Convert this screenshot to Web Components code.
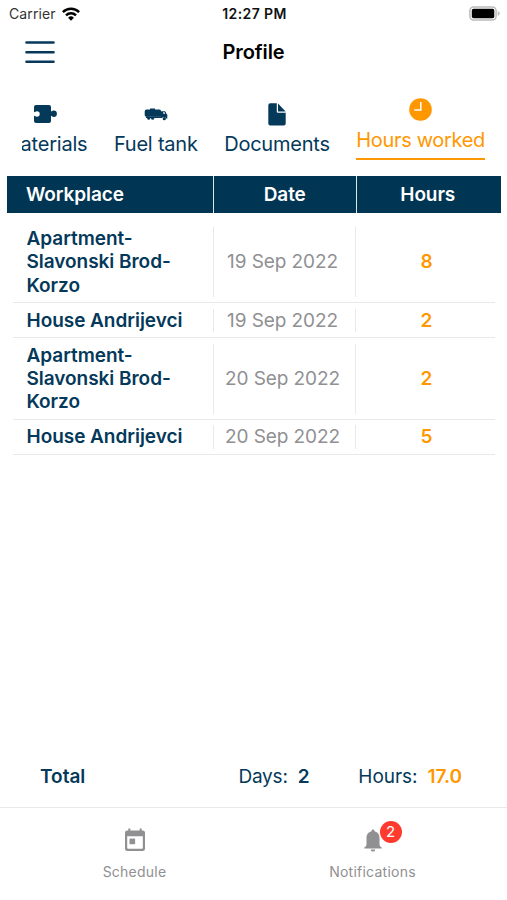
<!DOCTYPE html>
<html lang="en">
<head>
<meta charset="utf-8">
<meta name="viewport" content="width=device-width, initial-scale=1">
<title>Profile</title>
<style>
    html, body{height:100%;}
    body{
        margin:0;
        background:#fff;
        font-family:Inter, "Liberation Sans", sans-serif;
        --navy:#05395a;
        --header:#003654;
        --orange:#ff9800;
        --grey:#909092;
        --line:#e9e9e9;
    }
</style>
</head>
<body>
<profile-screen></profile-screen>

<script>
function attach(el, html) {
    const template = document.createElement('template');
    template.innerHTML = html;
    el.attachShadow({ mode: 'open' });
    el.shadowRoot.appendChild(template.content.cloneNode(true));
}

const icons = {
    puzzle: `<svg width="24" height="20" viewBox="0 0 24 20"><path fill="currentColor" d="M3 1h13q2 0 2 2v4.600c1-.4 1.300-1.100 2.700-1.100a2.800 2.800 0 0 1 0 6.400c-1.400 0-1.700-.8-2.700-1.100V17q0 2-2 2H3q-2 0-2-2v-5.200c1 0 1.500.9 3 .9a2.700 2.700 0 0 0 0-5.400c-1.500 0-2 .9-3 .9V3q0-2 2-2z"/></svg>`,
    truck: `<svg width="24" height="13" viewBox="0 0 24 13"><g fill="currentColor"><path d="M2.500 1.500H6V.6h5v.9h4.500q1.500.2 1.500 1.500v5.500H2Q.7 8.500.7 7V3.500q0-1.800 1.800-2z"/><path d="M17 3.200h3.500q1 0 1.300 1l.5 1.600 1 .6V10.600h-1.200a2.200 2.200 0 0 0-4-.6H2V8.300h15z"/><circle cx="4.700" cy="10.300" r="1.500"/><circle cx="8.600" cy="10.300" r="1.500"/><circle cx="20.300" cy="10.700" r="1.600"/></g><path fill="#fff" d="M19.200 4.300h1.400l.5 1.500h-1.900z"/></svg>`,
    file: `<svg width="18" height="23" viewBox="0 0 18 23"><path fill="currentColor" d="M2.300.3h6.500v8.500q0 1 1 1h7.900v10.700q0 2-2 2H2.300q-2 0-2-2V2.300q0-2 2-2z"/><path fill="currentColor" d="M10 .6l7.600 7.900H10z"/></svg>`,
    clock: `<svg width="23" height="23" viewBox="0 0 23 23"><circle cx="11.500" cy="11.500" r="11.300" fill="currentColor"/><path fill="none" stroke="#fff" stroke-width="1.500" d="M11.800 3.900v8H5.300"/></svg>`,
    calendar: `<svg width="22" height="24" viewBox="0 0 22 24"><path fill="currentColor" fill-rule="evenodd" d="M4.300.5h2v2h9.400v-2h2v2h1q2.300 0 2.300 2.300v15.900q0 2.300-2.300 2.300H3.300Q1 23 1 20.700V4.800q0-2.300 2.300-2.300h1zM3.200 8.200v11.600q0 1 1 1h13.600q1 0 1-1V8.200z"/><path fill="currentColor" d="M5.500 10.600h5.600v5.600H5.500z"/></svg>`,
    bell: `<svg width="18" height="23" viewBox="0 0 18 23"><path fill="currentColor" d="M9 .5c1 0 1.500.7 1.500 1.700 3.500.8 5 3.500 5 6.800v6.500q0 1.800 2.200 3v.9H.3v-.9q2.200-1.200 2.200-3V9c0-3.300 1.500-6 5-6.800C7.500 1.200 8 .5 9 .5zM6.800 20.400h4.400a2.200 2.200 0 0 1-4.400 0z"/></svg>`
};

class StatusBar extends HTMLElement {
    constructor() {
        super();
        attach(this, `
            <style>
                :host{
                    display:grid;
                    grid-template-columns:1fr auto 1fr;
                    align-items:center;
                    height:27px;
                    padding:0 7px 0 9px;
                    box-sizing:border-box;
                    color:#111;
                    font-size:14px;
                }
                .left{display:flex;align-items:center;gap:6px;color:#333;letter-spacing:.1px;}
                .time{font-weight:600;letter-spacing:.4px;}
                .battery{justify-self:end;}
                svg{display:block;}
            </style>
            <div class="left"><span>Carrier</span>
                <svg width="18" height="14" viewBox="0 0 18 14"><g fill="none" stroke="#000" stroke-width="2.500"><path d="M.9 5.100a11.700 11.700 0 0 1 16.200 0"/><path d="M4 8.400a7.100 7.100 0 0 1 10 0"/></g><path d="M9 13.700l-2.900-3a4.200 4.200 0 0 1 5.800 0z"/></svg>
            </div>
            <span class="time">12:27 PM</span>
            <svg class="battery" width="31" height="15" viewBox="0 0 31 15"><rect x=".9" y=".9" width="26.200" height="13.200" rx="3.800" fill="#fff" stroke="#bbb" stroke-width="1.500"/><path fill="#bbb" d="M28.700 5q2 .8 2 2.500t-2 2.500z"/><rect x="2.800" y="2.800" width="22.500" height="9.400" rx="1.800"/></svg>
        `);
    }
}

class NavHeader extends HTMLElement {
    constructor() {
        super();
        attach(this, `
            <style>
                :host{
                    display:grid;
                    grid-template-columns:1fr auto 1fr;
                    align-items:center;
                    height:50px;
                    padding:0 25px;
                }
                .menu{display:block;}
                .title{font-size:20px;font-weight:600;color:#000;letter-spacing:-.1px;}
            </style>
            <svg class="menu" width="30" height="24" viewBox="0 0 30 24"><path stroke="#07395a" stroke-width="2.600" stroke-linecap="round" d="M1.500 2.500h27M1.500 12.200h27M1.500 21.700h27"/></svg>
            <span class="title"><slot></slot></span>
        `);
    }
}

class TabItem extends HTMLElement {
    constructor() {
        super();
        attach(this, `
            <style>
                :host{
                    display:flex;
                    flex-direction:column;
                    align-items:center;
                    flex:none;
                    height:62px;
                    box-sizing:border-box;
                    padding-top:4px;
                    color:var(--navy);
                    font-size:20px;
                    letter-spacing:-.22px;
                }
                :host([active]){
                    padding-top:0;
                    border-bottom:2.500px solid var(--orange);
                    color:var(--orange);
                    letter-spacing:-.33px;
                }
                .icon{display:flex;align-items:center;justify-content:center;height:24px;}
                :host([active]) .icon{height:22px;padding-bottom:2px;}
                .label{line-height:28px;margin-top:4px;white-space:nowrap;}
            </style>
            <div class="icon">${icons[this.getAttribute('icon')]}</div>
            <div class="label"><slot></slot></div>
        `);
    }
}

class TabStrip extends HTMLElement {
    constructor() {
        super();
        attach(this, `
            <style>
                /* scrolled to its end, so the first tab runs out on the left */
                :host{
                    display:flex;
                    justify-content:flex-end;
                    gap:26.500px;
                    margin:21px 22px 0;
                    overflow:hidden;
                }
            </style>
            <slot></slot>
        `);
    }
}

class HoursRow extends HTMLElement {
    constructor() {
        super();
        attach(this, `
            <style>
                :host{
                    display:grid;
                    grid-template-columns:201px 142px 1fr;
                    margin:0 12px 0 13px;
                    padding:5.500px 0 5px;
                    border-bottom:1px solid var(--line);
                    line-height:23.400px;
                    font-size:19px;
                }
                div{
                    display:flex;
                    align-items:center;
                    justify-content:center;
                    border-right:1px solid var(--line);
                }
                .place{justify-content:flex-start;padding-left:13.500px;padding-right:25px;font-weight:600;letter-spacing:-.04px;color:var(--navy);}
                .date{padding-right:4px;letter-spacing:-.08px;color:var(--grey);}
                .hours{border:0;padding-left:2px;font-weight:600;color:var(--orange);}
            </style>
            <div class="place"><slot></slot></div>
            <div class="date">${this.getAttribute('date')}</div>
            <div class="hours">${this.getAttribute('hours')}</div>
        `);
    }
}

class HoursTable extends HTMLElement {
    constructor() {
        super();
        attach(this, `
            <style>
                :host{display:block;margin-top:15.500px;}
                .head{
                    display:grid;
                    grid-template-columns:207px 142.500px 1fr;
                    height:37px;
                    margin:0 6px 9px 7px;
                    background:var(--header);
                    color:#fff;
                    font-size:19px;
                    font-weight:600;
                    letter-spacing:-.1px;
                }
                .head span{display:flex;align-items:center;justify-content:center;border-right:1.500px solid #dfe6ea;box-sizing:border-box;}
                .head span:first-child{justify-content:flex-start;padding-left:19px;}
                .head span:last-child{border:0;padding-right:2px;}
            </style>
            <div class="head"><span>Workplace</span><span>Date</span><span>Hours</span></div>
            <slot></slot>
        `);
    }
}

class TotalBar extends HTMLElement {
    constructor() {
        super();
        attach(this, `
            <style>
                :host{
                    display:flex;
                    align-items:center;
                    height:62px;
                    padding:0 45px 0 40px;
                    color:var(--navy);
                    font-size:19px;
                }
                b{font-weight:600;}
                .total{flex:1;}
                .pair{display:flex;gap:10px;}
                .days{letter-spacing:-.2px;}
                .hours{margin-left:49px;letter-spacing:-.04px;}
                .hours b{color:var(--orange);}
            </style>
            <b class="total">Total</b>
            <span class="pair days"><span>Days:</span><b>${this.getAttribute('days')}</b></span>
            <span class="pair hours"><span>Hours:</span><b>${this.getAttribute('hours')}</b></span>
        `);
    }
}

class BottomTab extends HTMLElement {
    constructor() {
        super();
        const badge = this.getAttribute('badge');
        attach(this, `
            <style>
                :host{
                    display:flex;
                    flex-direction:column;
                    align-items:center;
                    width:238px;
                    padding-top:20px;
                    color:var(--grey);
                    font-size:14px;
                }
                .icon{position:relative;display:flex;height:24px;align-items:center;}
                .label{margin-top:11px;line-height:18px;letter-spacing:.24px;}
                .badge{
                    position:absolute;
                    left:16px;
                    top:-7px;
                    width:22px;
                    height:22px;
                    border-radius:50%;
                    background:#ff3b30;
                    color:#fff;
                    font-size:15px;
                    line-height:22px;
                    text-align:center;
                }
            </style>
            <div class="icon">${icons[this.getAttribute('icon')]}${badge ? `<span class="badge">${badge}</span>` : ''}</div>
            <div class="label"><slot></slot></div>
        `);
    }
}

class ProfileScreen extends HTMLElement {
    constructor() {
        super();
        attach(this, `
            <style>
                :host{display:flex;flex-direction:column;height:100vh;min-height:900px;overflow:hidden;}
                main{flex:1;}
                nav{
                    display:flex;
                    justify-content:center;
                    height:93px;
                    box-sizing:border-box;
                    border-top:1.500px solid #e9e9e9;
                }
            </style>
            <status-bar></status-bar>
            <nav-header>Profile</nav-header>
            <main>
                <tab-strip>
                    <tab-item icon="puzzle">Materials</tab-item>
                    <tab-item icon="truck">Fuel tank</tab-item>
                    <tab-item icon="file">Documents</tab-item>
                    <tab-item icon="clock" active>Hours worked</tab-item>
                </tab-strip>
                <hours-table>
                    <hours-row date="19 Sep 2022" hours="8">Apartment-Slavonski Brod-Korzo</hours-row>
                    <hours-row date="19 Sep 2022" hours="2">House Andrijevci</hours-row>
                    <hours-row date="20 Sep 2022" hours="2">Apartment-Slavonski Brod-Korzo</hours-row>
                    <hours-row date="20 Sep 2022" hours="5">House Andrijevci</hours-row>
                </hours-table>
            </main>
            <total-bar days="2" hours="17.0"></total-bar>
            <nav>
                <bottom-tab icon="calendar">Schedule</bottom-tab>
                <bottom-tab icon="bell" badge="2">Notifications</bottom-tab>
            </nav>
        `);
    }
}

window.customElements.define('status-bar', StatusBar);
window.customElements.define('nav-header', NavHeader);
window.customElements.define('tab-item', TabItem);
window.customElements.define('tab-strip', TabStrip);
window.customElements.define('hours-row', HoursRow);
window.customElements.define('hours-table', HoursTable);
window.customElements.define('total-bar', TotalBar);
window.customElements.define('bottom-tab', BottomTab);
window.customElements.define('profile-screen', ProfileScreen);
</script>
</body>
</html>
